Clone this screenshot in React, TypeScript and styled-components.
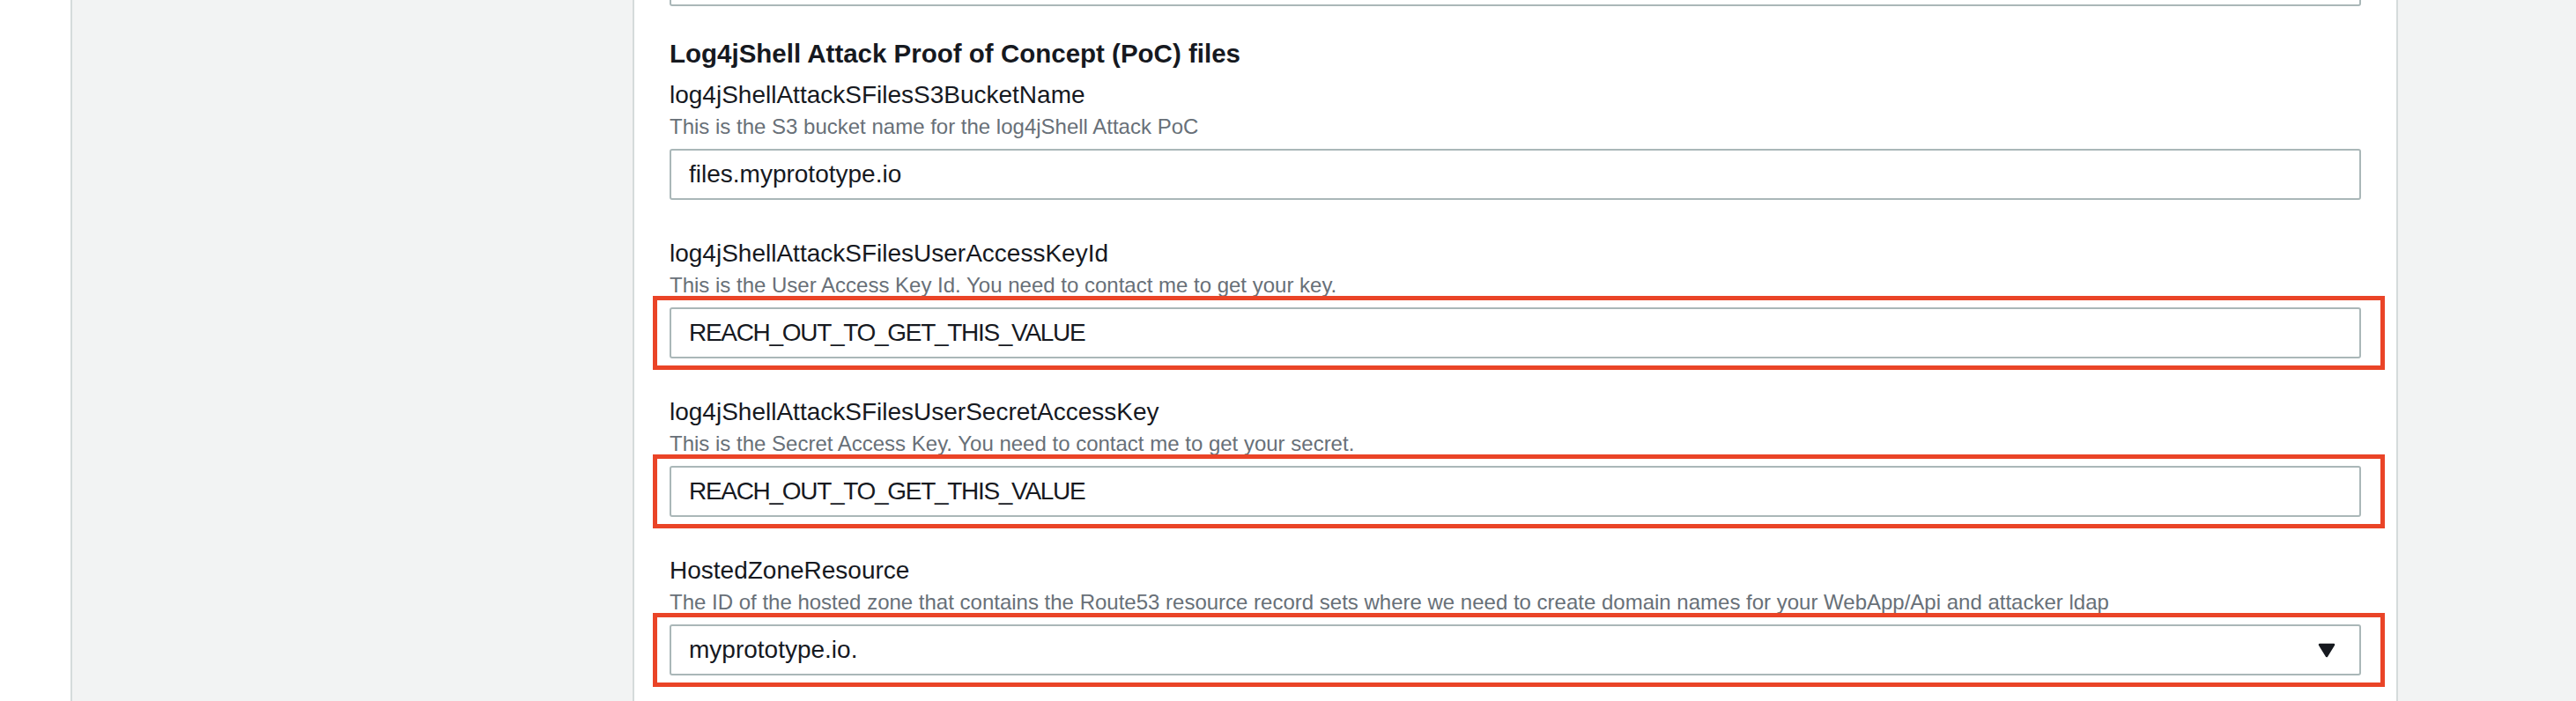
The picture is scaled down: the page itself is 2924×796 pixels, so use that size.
import React from "react";
import styled, {createGlobalStyle} from "styled-components";

const GlobalStyle = createGlobalStyle`
  html, body {
    margin: 0;
    padding: 0;
    background: #ffffff;
    overflow: hidden;
  }

  body {
    font-family: "Liberation Sans", Arial, sans-serif;
    color: #16191f;
  }
`

const Page = styled.div`
  display: flex;
  height: 796px;
  padding-left: 80px;
  background: #ffffff;
`

const Shell = styled.div`
  flex: 1;
  display: flex;
  background: #f2f3f3;
  border-left: 2px solid #d5dbdb;
`

const Sidebar = styled.aside`
  width: 636px;
  flex-shrink: 0;
`

const Panel = styled.main`
  width: 1920px;
  flex-shrink: 0;
  padding: 0 40px;
  background: #ffffff;
  border-left: 2px solid #d5dbdb;
  border-right: 2px solid #d5dbdb;
  overflow: hidden;
`

const SectionTitle = styled.h2`
  margin: 36px 0 0 0;
  font-size: 29.5px;
  line-height: 36px;
  font-weight: 700;
  color: #16191f;
`

const Field = styled.div<{ $first?: boolean }>`
  display: flex;
  flex-direction: column;
  margin-top: ${({$first}) => ($first ? "12px" : "44px")};
`

const Label = styled.label`
  font-size: 28px;
  line-height: 34px;
  color: #16191f;
`

const Description = styled.div`
  margin-top: 4px;
  margin-bottom: 10px;
  font-size: 24px;
  line-height: 30px;
  color: #687078;
`

const TextInput = styled.input<{ $cut?: boolean; $tight?: boolean }>`
  display: block;
  box-sizing: border-box;
  width: 100%;
  height: 58px;
  margin: ${({$cut}) => ($cut ? "-51px 0 0 0" : "0")};
  padding: 0 20px;
  border: 2px solid #aab7b8;
  border-radius: 3px;
  background: #ffffff;
  font-family: "Liberation Sans", Arial, sans-serif;
  font-size: 28px;
  letter-spacing: ${({$tight}) => ($tight ? "-1.3px" : "0")};
  color: #16191f;
  outline: none;
`

const SelectBox = styled.div`
  display: flex;
  align-items: center;
  justify-content: space-between;
  box-sizing: border-box;
  height: 58px;
  padding: 0 27px 0 20px;
  border: 2px solid #aab7b8;
  border-radius: 3px;
  background: #ffffff;
  font-size: 28px;
  color: #16191f;
`

/* red annotation box drawn round a control; negative margins keep the control in place */
const Highlight = styled.div`
  margin: -13px -27px -13px -19px;
  padding: 8px 22px 8px 14px;
  border: 5px solid #ea4427;
`

const Caret = () => (
  <svg width="20" height="17" viewBox="0 0 20 17">
    <path d="M2 2 L18 2 L10 15 Z" fill="#16191f" stroke="#16191f" strokeWidth="2.5" strokeLinejoin="round"/>
  </svg>
)

interface FieldProps {
  label: string;
  description: string;
  first?: boolean;
  children: React.ReactNode;
}

const FormField = ({label, description, first, children}: FieldProps) => (
  <Field $first={first}>
    <Label>{label}</Label>
    <Description>{description}</Description>
    {children}
  </Field>
)

const App = () => {
  return (
    <>
      <GlobalStyle/>
      <Page>
        <Shell>
          <Sidebar/>
          <Panel>
            <TextInput $cut readOnly value=""/>
            <SectionTitle>Log4jShell Attack Proof of Concept (PoC) files</SectionTitle>

            <FormField
              first
              label="log4jShellAttackSFilesS3BucketName"
              description="This is the S3 bucket name for the log4jShell Attack PoC"
            >
              <TextInput readOnly value="files.myprototype.io"/>
            </FormField>

            <FormField
              label="log4jShellAttackSFilesUserAccessKeyId"
              description="This is the User Access Key Id. You need to contact me to get your key."
            >
              <Highlight>
                <TextInput $tight readOnly value="REACH_OUT_TO_GET_THIS_VALUE"/>
              </Highlight>
            </FormField>

            <FormField
              label="log4jShellAttackSFilesUserSecretAccessKey"
              description="This is the Secret Access Key. You need to contact me to get your secret."
            >
              <Highlight>
                <TextInput $tight readOnly value="REACH_OUT_TO_GET_THIS_VALUE"/>
              </Highlight>
            </FormField>

            <FormField
              label="HostedZoneResource"
              description="The ID of the hosted zone that contains the Route53 resource record sets where we need to create domain names for your WebApp/Api and attacker ldap"
            >
              <Highlight>
                <SelectBox>
                  <span>myprototype.io.</span>
                  <Caret/>
                </SelectBox>
              </Highlight>
            </FormField>
          </Panel>
        </Shell>
      </Page>
    </>
  )
}

export default App;
